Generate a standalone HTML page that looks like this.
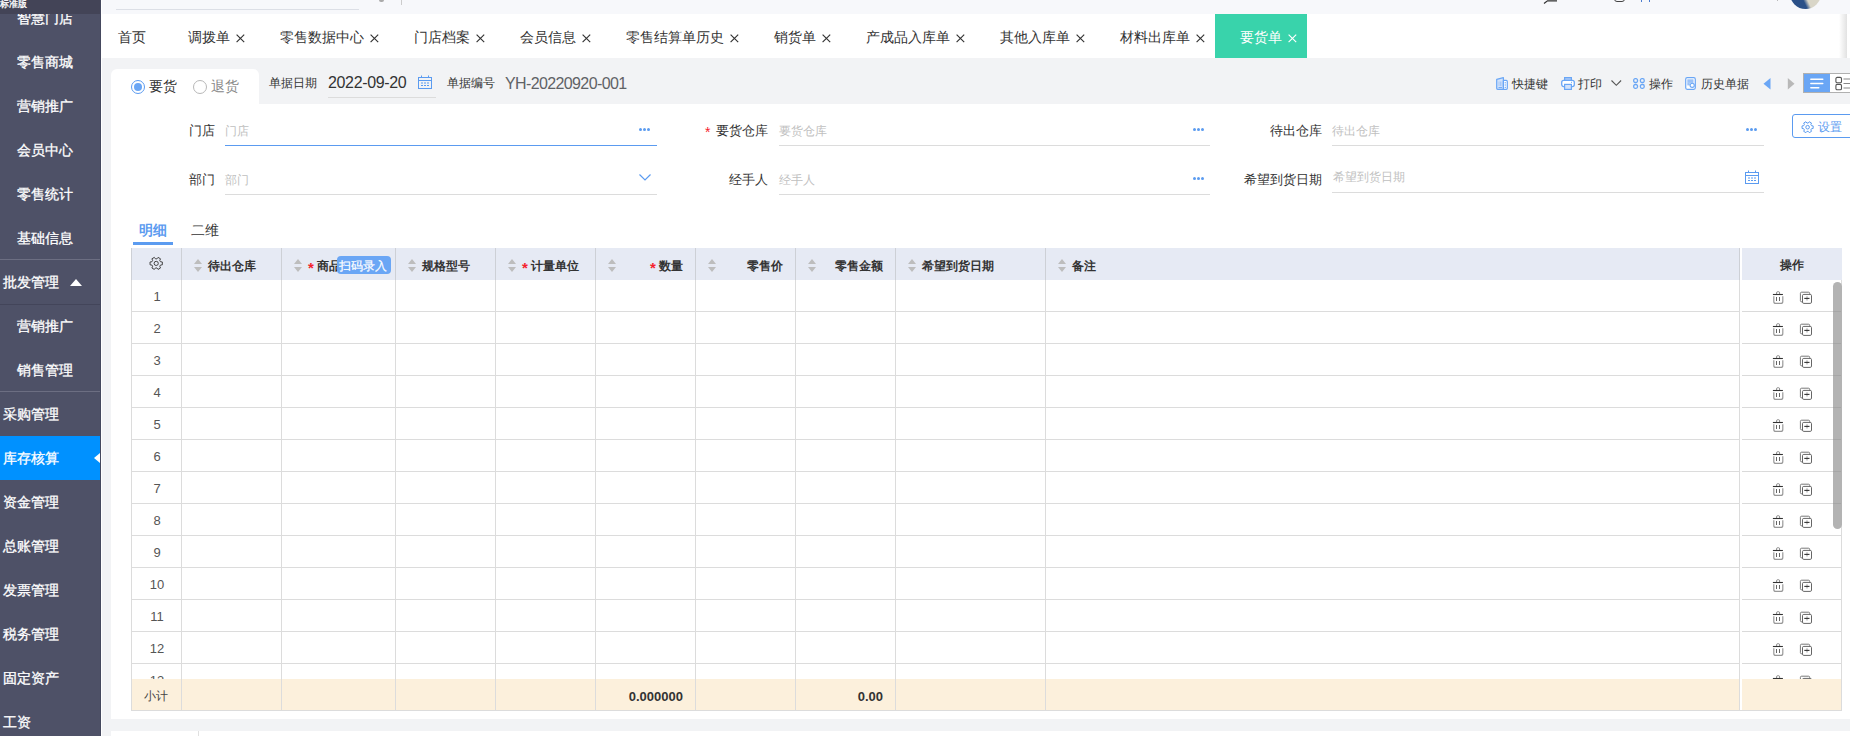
<!DOCTYPE html>
<html><head><meta charset="utf-8">
<style>
*{box-sizing:border-box;margin:0;padding:0}
html,body{width:1850px;height:736px;overflow:hidden}
body{position:relative;background:#f2f3f5;font-family:"Liberation Sans",sans-serif;color:#333}
.a{position:absolute;white-space:nowrap}
#side{position:absolute;left:0;top:0;width:100px;height:736px;background:#4e5167;overflow:hidden}
#side .it{position:absolute;left:0;width:100px;height:44px;line-height:44px;font-size:14px;color:#fff;-webkit-text-stroke:0.3px #fff}
#side .sub{padding-left:17px}
#side .main{padding-left:3px}
.t14{font-size:14px;line-height:20px}
.t13{font-size:13px;line-height:18px}
.t12{font-size:12px;line-height:16px}
.t15{font-size:15px;line-height:20px}
svg{position:absolute;overflow:visible}
</style></head><body>

<div id="side">
<div class="it sub" style="top:-4px">智慧门店</div>
<div style="position:absolute;left:0;top:0;width:100px;height:14px;background:#434457;overflow:hidden"><div style="position:absolute;left:0px;top:-2px;font-size:9px;color:#fff;line-height:12px;-webkit-text-stroke:0.3px #fff">标准版</div></div>
<div class="it sub" style="top:40px">零售商城</div>
<div class="it sub" style="top:84px">营销推广</div>
<div class="it sub" style="top:128px">会员中心</div>
<div class="it sub" style="top:172px">零售统计</div>
<div class="it sub" style="top:216px">基础信息</div>
<div class="a" style="left:0;top:259px;width:100px;height:1px;background:#6c6e82"></div>
<div class="it main" style="top:260px">批发管理</div>
<div class="a" style="left:70px;top:279px;width:0;height:0;border-left:6px solid transparent;border-right:6px solid transparent;border-bottom:7px solid #fff"></div>
<div class="a" style="left:0;top:304px;width:100px;height:1px;background:#43455a"></div>
<div class="it sub" style="top:304px">营销推广</div>
<div class="it sub" style="top:348px">销售管理</div>
<div class="a" style="left:0;top:391px;width:100px;height:1px;background:#6c6e82"></div>
<div class="it main" style="top:392px">采购管理</div>
<div class="it main" style="top:436px;background:#0091ff">库存核算</div>
<div class="a" style="left:94px;top:453px;width:0;height:0;border-top:5px solid transparent;border-bottom:5px solid transparent;border-right:6px solid #fff"></div>
<div class="it main" style="top:480px">资金管理</div>
<div class="it main" style="top:524px">总账管理</div>
<div class="it main" style="top:568px">发票管理</div>
<div class="it main" style="top:612px">税务管理</div>
<div class="it main" style="top:656px">固定资产</div>
<div class="it main" style="top:700px">工资</div>
</div>
<div class="a" style="left:100px;top:0;width:1px;height:736px;background:#45495e"></div>
<div class="a" style="left:101px;top:0;width:1px;height:736px;background:#fff"></div>
<div class="a" style="left:102px;top:0;width:1748px;height:14px;background:#f7f8fb"></div>
<div class="a" style="left:116px;top:9px;width:243px;height:1px;background:#dcdfe6"></div>
<div class="a" style="left:401px;top:0;width:1px;height:5px;background:#ccc"></div>
<div class="a" style="left:379px;top:0;width:5px;height:2px;background:#aaa;border-radius:0 0 2px 2px"></div>
<svg style="left:1543px;top:0" width="15" height="4" viewBox="0 0 15 4"><path d="M1 3.5L4.5 0.8H14" fill="none" stroke="#333" stroke-width="1.2"/></svg>
<div class="a" style="left:1614px;top:-9px;width:11px;height:10.5px;border:1.3px solid #444;border-radius:3px"></div>
<div class="a" style="left:1641px;top:0;width:1px;height:1.5px;background:#4a7bd0"></div>
<div class="a" style="left:1649px;top:0;width:1px;height:1.5px;background:#4a7bd0"></div>
<div class="a" style="left:1777px;top:0;width:1px;height:1px;background:#bbb"></div>
<div class="a" style="left:1790px;top:-22px;width:31px;height:31px;border-radius:50%;background:linear-gradient(65deg,#2a5088 0,#2a5088 38%,#d9d6c8 48%,#d9d6c8 100%)"></div>
<div class="a" style="left:102px;top:14px;width:1748px;height:44px;background:#fff"></div>
<div class="a" style="left:1215px;top:14px;width:92px;height:44px;background:#39d3ab"></div>
<div class="a" style="left:1839px;top:14px;width:8px;height:44px;background:linear-gradient(90deg,rgba(220,220,220,0),#e2e2e2)"></div>
<div class="a t14" style="left:118px;top:26.5px;color:#333">首页</div>
<div class="a t14" style="left:188px;top:26.5px;color:#333">调拨单</div>
<svg style="left:236px;top:33.5px" width="9" height="9" viewBox="0 0 9 9"><path d="M0.6 0.6L8.2 8.2M8.2 0.6L0.6 8.2" stroke="#333" stroke-width="1.15"/></svg>
<div class="a t14" style="left:280px;top:26.5px;color:#333">零售数据中心</div>
<svg style="left:370px;top:33.5px" width="9" height="9" viewBox="0 0 9 9"><path d="M0.6 0.6L8.2 8.2M8.2 0.6L0.6 8.2" stroke="#333" stroke-width="1.15"/></svg>
<div class="a t14" style="left:414px;top:26.5px;color:#333">门店档案</div>
<svg style="left:476px;top:33.5px" width="9" height="9" viewBox="0 0 9 9"><path d="M0.6 0.6L8.2 8.2M8.2 0.6L0.6 8.2" stroke="#333" stroke-width="1.15"/></svg>
<div class="a t14" style="left:520px;top:26.5px;color:#333">会员信息</div>
<svg style="left:582px;top:33.5px" width="9" height="9" viewBox="0 0 9 9"><path d="M0.6 0.6L8.2 8.2M8.2 0.6L0.6 8.2" stroke="#333" stroke-width="1.15"/></svg>
<div class="a t14" style="left:626px;top:26.5px;color:#333">零售结算单历史</div>
<svg style="left:730px;top:33.5px" width="9" height="9" viewBox="0 0 9 9"><path d="M0.6 0.6L8.2 8.2M8.2 0.6L0.6 8.2" stroke="#333" stroke-width="1.15"/></svg>
<div class="a t14" style="left:774px;top:26.5px;color:#333">销货单</div>
<svg style="left:822px;top:33.5px" width="9" height="9" viewBox="0 0 9 9"><path d="M0.6 0.6L8.2 8.2M8.2 0.6L0.6 8.2" stroke="#333" stroke-width="1.15"/></svg>
<div class="a t14" style="left:866px;top:26.5px;color:#333">产成品入库单</div>
<svg style="left:956px;top:33.5px" width="9" height="9" viewBox="0 0 9 9"><path d="M0.6 0.6L8.2 8.2M8.2 0.6L0.6 8.2" stroke="#333" stroke-width="1.15"/></svg>
<div class="a t14" style="left:1000px;top:26.5px;color:#333">其他入库单</div>
<svg style="left:1076px;top:33.5px" width="9" height="9" viewBox="0 0 9 9"><path d="M0.6 0.6L8.2 8.2M8.2 0.6L0.6 8.2" stroke="#333" stroke-width="1.15"/></svg>
<div class="a t14" style="left:1120px;top:26.5px;color:#333">材料出库单</div>
<svg style="left:1196px;top:33.5px" width="9" height="9" viewBox="0 0 9 9"><path d="M0.6 0.6L8.2 8.2M8.2 0.6L0.6 8.2" stroke="#333" stroke-width="1.15"/></svg>
<div class="a t14" style="left:1240px;top:26.5px;color:#fff">要货单</div>
<svg style="left:1288px;top:33.5px" width="9" height="9" viewBox="0 0 9 9"><path d="M0.6 0.6L8.2 8.2M8.2 0.6L0.6 8.2" stroke="#fff" stroke-width="1.15"/></svg>
<div class="a" style="left:111px;top:69px;width:148px;height:40px;background:#fff;border-radius:6px 6px 0 0"></div>
<div class="a" style="left:131px;top:80px;width:14px;height:14px;border-radius:50%;border:1px solid #5b9bf0;background:#fff"></div>
<div class="a" style="left:134px;top:83px;width:8px;height:8px;border-radius:50%;background:#6aa6f5"></div>
<div class="a t14" style="left:149px;top:76px;color:#333">要货</div>
<div class="a" style="left:193px;top:80px;width:14px;height:14px;border-radius:50%;border:1px solid #b8b8b8;background:#fff"></div>
<div class="a t14" style="left:211px;top:76px;color:#888">退货</div>
<div class="a t12" style="left:269px;top:75px;color:#333">单据日期</div>
<div class="a" style="left:328px;top:73px;color:#333;font-size:16px;line-height:20px;letter-spacing:-0.35px">2022-09-20</div>
<svg style="left:418px;top:75px" width="14" height="14" viewBox="0 0 14 14"><rect x="0.5" y="2.5" width="13" height="11" fill="none" stroke="#5b9bf0"/><path d="M0.5 5.5H13.5M3.5 0.5V3M10.5 0.5V3M3 8H5M6 8H8M9 8H11M3 10.5H5M6 10.5H8M9 10.5H11" stroke="#5b9bf0"/></svg>
<div class="a" style="left:328px;top:97px;width:108px;height:1px;background:#dcdcdc"></div>
<div class="a t12" style="left:447px;top:75px;color:#333">单据编号</div>
<div class="a" style="left:505px;top:74px;color:#606266;font-size:16px;line-height:20px;letter-spacing:-0.62px">YH-20220920-001</div>
<svg style="left:1496px;top:77px" width="12" height="13" viewBox="0 0 12 13"><path d="M0.7 2.3L7.4 0.7V12.3H1.7A1 1 0 0 1 0.7 11.3Z" fill="#d3e3fb" stroke="#6aa6f5" stroke-width="1.2" stroke-linejoin="round"/><path d="M7.4 3.4H10.3A1 1 0 0 1 11.3 4.4V11.3A1 1 0 0 1 10.3 12.3H7.4Z" fill="#fff" stroke="#6aa6f5" stroke-width="1.2" stroke-linejoin="round"/><path d="M3 4.5V9M4.5 4.5V9M6 4.5V9" stroke="#9cc2f7" stroke-width="0.8"/><path d="M2.5 10.6H6M8.6 5.8H10M8.6 8H10M8.6 10.3H10" stroke="#6aa6f5" stroke-width="1"/></svg>
<div class="a t12" style="left:1512px;top:76px;color:#333">快捷键</div>
<svg style="left:1561px;top:77px" width="14" height="13" viewBox="0 0 14 13"><rect x="3.6" y="0.6" width="6.8" height="3" fill="#a9c9f8" stroke="#6aa6f5" stroke-width="1.2"/><rect x="0.7" y="3.4" width="12.6" height="6.2" rx="2" fill="#fff" stroke="#6aa6f5" stroke-width="1.3"/><rect x="3.6" y="7.4" width="6.8" height="5" fill="#d3e3fb" stroke="#6aa6f5" stroke-width="1.2"/><path d="M10 5.3H11" stroke="#6aa6f5"/></svg>
<div class="a t12" style="left:1578px;top:76px;color:#333">打印</div>
<svg style="left:1611px;top:80px" width="11" height="6" viewBox="0 0 11 6"><path d="M0.5 0.5L5.3 5.3L10.1 0.5" fill="none" stroke="#555" stroke-width="1.1"/></svg>
<svg style="left:1633px;top:78px" width="12" height="11" viewBox="0 0 12 11"><rect x="0.7" y="0.7" width="3.8" height="3.8" rx="1.5" fill="none" stroke="#6aa6f5" stroke-width="1.3"/><rect x="7.4" y="0.7" width="3.8" height="3.8" rx="1.5" fill="none" stroke="#6aa6f5" stroke-width="1.3"/><rect x="0.7" y="6.5" width="3.8" height="3.8" rx="1.5" fill="none" stroke="#6aa6f5" stroke-width="1.3"/><rect x="7.4" y="6.5" width="3.8" height="3.8" rx="1.5" fill="none" stroke="#6aa6f5" stroke-width="1.3"/></svg>
<div class="a t12" style="left:1649px;top:76px;color:#333">操作</div>
<svg style="left:1685px;top:77px" width="11" height="13" viewBox="0 0 11 13"><rect x="0.7" y="0.7" width="9.6" height="11.6" rx="1.5" fill="#fff" stroke="#6aa6f5" stroke-width="1.2"/><rect x="2.3" y="2.3" width="6.2" height="3.6" fill="#9cc2f7"/><rect x="2.3" y="5.9" width="2.5" height="2.5" fill="#9cc2f7"/><circle cx="7.2" cy="8.3" r="2.1" fill="#fff" stroke="#6aa6f5" stroke-width="1.1"/></svg>
<div class="a t12" style="left:1701px;top:76px;color:#333">历史单据</div>
<svg style="left:1763px;top:77.5px" width="8" height="12" viewBox="0 0 8 12"><path d="M7.5 0V11.5L0.5 5.75Z" fill="#6aa6f5"/></svg>
<svg style="left:1787px;top:77.5px" width="8" height="12" viewBox="0 0 8 12"><path d="M0.8 0V11.5L7.5 5.75Z" fill="#b8b8b8"/></svg>
<div class="a" style="left:1803px;top:73px;width:60px;height:20px;border:1px solid #b0b0b0;background:#fff"></div>
<div class="a" style="left:1804px;top:74px;width:26px;height:18px;background:#6aa6f5"></div>
<svg style="left:1810px;top:77px" width="13" height="12" viewBox="0 0 13 12"><path d="M0.8 2.2H12.8M0.8 6.5H12.8M0.8 10.7H8.8" stroke="#fff" stroke-width="1.4" stroke-linecap="round"/></svg>
<svg style="left:1835px;top:77px" width="15" height="14" viewBox="0 0 15 14"><rect x="0.9" y="0.4" width="5.6" height="5.4" rx="1.3" fill="none" stroke="#555" stroke-width="1.1"/><rect x="0.9" y="7.4" width="5.6" height="5.4" rx="1.3" fill="none" stroke="#555" stroke-width="1.1"/><path d="M8.5 2H15M8.5 6.5H15M8.5 11H15" stroke="#888" stroke-width="1.2"/></svg>
<div class="a" style="left:111px;top:104px;width:1739px;height:615px;background:#fff"></div>
<div class="a" style="left:111px;top:731px;width:1739px;height:5px;background:#fff"></div>
<div class="a" style="left:198px;top:731px;width:1px;height:5px;background:#e0e0e0"></div>
<div class="a t13" style="right:1635px;top:122px;color:#333">门店</div>
<div class="a t12" style="left:225px;top:123px;color:#bfbfbf">门店</div>
<div class="a" style="left:225px;top:145px;width:432px;height:1px;background:#5b9bf0"></div>
<div class="a" style="left:639px;top:128px;width:3px;height:3px;border-radius:50%;background:#5b9bf0"></div><div class="a" style="left:643px;top:128px;width:3px;height:3px;border-radius:50%;background:#5b9bf0"></div><div class="a" style="left:647px;top:128px;width:3px;height:3px;border-radius:50%;background:#5b9bf0"></div>
<div class="a t13" style="right:1082px;top:122px;color:#333">要货仓库</div>
<div class="a" style="left:705px;top:123px;color:#f5222d;font-size:14px;line-height:18px">*</div>
<div class="a t12" style="left:779px;top:123px;color:#bfbfbf">要货仓库</div>
<div class="a" style="left:779px;top:145px;width:431px;height:1px;background:#dcdcdc"></div>
<div class="a" style="left:1193px;top:128px;width:3px;height:3px;border-radius:50%;background:#5b9bf0"></div><div class="a" style="left:1197px;top:128px;width:3px;height:3px;border-radius:50%;background:#5b9bf0"></div><div class="a" style="left:1201px;top:128px;width:3px;height:3px;border-radius:50%;background:#5b9bf0"></div>
<div class="a t13" style="right:528px;top:122px;color:#333">待出仓库</div>
<div class="a t12" style="left:1332px;top:123px;color:#bfbfbf">待出仓库</div>
<div class="a" style="left:1332px;top:145px;width:432px;height:1px;background:#dcdcdc"></div>
<div class="a" style="left:1746px;top:128px;width:3px;height:3px;border-radius:50%;background:#5b9bf0"></div><div class="a" style="left:1750px;top:128px;width:3px;height:3px;border-radius:50%;background:#5b9bf0"></div><div class="a" style="left:1754px;top:128px;width:3px;height:3px;border-radius:50%;background:#5b9bf0"></div>
<div class="a" style="left:1792px;top:114px;width:70px;height:24px;border:1px solid #5b9bf0;border-radius:3px;background:#fff"></div>
<svg style="left:1801px;top:121px" width="13" height="13" viewBox="0 0 13 13"><path d="M10.52 4.69L12.15 4.92L12.15 7.48L10.52 7.71L9.86 8.84L10.49 10.37L8.27 11.65L7.26 10.35L5.94 10.35L4.93 11.65L2.71 10.37L3.34 8.84L2.68 7.71L1.05 7.48L1.05 4.92L2.68 4.69L3.34 3.56L2.71 2.03L4.93 0.75L5.94 2.05L7.26 2.05L8.27 0.75L10.49 2.03L9.86 3.56Z" fill="none" stroke="#5b9bf0" stroke-linejoin="round"/><circle cx="6.6" cy="6.2" r="1.8" fill="none" stroke="#5b9bf0"/></svg>
<div class="a t12" style="left:1818px;top:119px;color:#5b9bf0">设置</div>
<div class="a t13" style="right:1635px;top:171px;color:#333">部门</div>
<div class="a t12" style="left:225px;top:172px;color:#bfbfbf">部门</div>
<div class="a" style="left:225px;top:194px;width:432px;height:1px;background:#dcdcdc"></div>
<svg style="left:639px;top:174px" width="12" height="7" viewBox="0 0 12 7"><path d="M0.5 0.5L6 6L11.5 0.5" fill="none" stroke="#5b9bf0" stroke-width="1.2"/></svg>
<div class="a t13" style="right:1082px;top:171px;color:#333">经手人</div>
<div class="a t12" style="left:779px;top:172px;color:#bfbfbf">经手人</div>
<div class="a" style="left:779px;top:194px;width:431px;height:1px;background:#dcdcdc"></div>
<div class="a" style="left:1193px;top:177px;width:3px;height:3px;border-radius:50%;background:#5b9bf0"></div><div class="a" style="left:1197px;top:177px;width:3px;height:3px;border-radius:50%;background:#5b9bf0"></div><div class="a" style="left:1201px;top:177px;width:3px;height:3px;border-radius:50%;background:#5b9bf0"></div>
<div class="a t13" style="right:528px;top:171px;color:#333">希望到货日期</div>
<div class="a t12" style="left:1333px;top:169px;color:#bfbfbf">希望到货日期</div>
<div class="a" style="left:1332px;top:192px;width:432px;height:1px;background:#dcdcdc"></div>
<svg style="left:1745px;top:170px" width="14" height="14" viewBox="0 0 14 14"><rect x="0.5" y="2.5" width="13" height="11" fill="none" stroke="#5b9bf0"/><path d="M0.5 5.5H13.5M3.5 0.5V3M10.5 0.5V3M3 8H5M6 8H8M9 8H11M3 10.5H5M6 10.5H8M9 10.5H11" stroke="#5b9bf0"/></svg>
<div class="a" style="left:139px;top:222px;color:#5b9bf0;font-weight:bold;font-size:13.6px;line-height:18px">明细</div>
<div class="a" style="left:133px;top:242px;width:40px;height:3px;background:#5b9bf0"></div>
<div class="a" style="left:191px;top:222px;color:#333;font-size:13.6px;line-height:18px">二维</div>
<div class="a" style="left:131px;top:248px;width:1608px;height:32px;background:#e6eaf4"></div>
<div class="a" style="left:1742px;top:248px;width:100px;height:32px;background:#e6eaf4"></div>
<div class="a" style="left:131px;top:311px;width:1609px;height:1px;background:#dcdcdc"></div>
<div class="a" style="left:131px;top:343px;width:1609px;height:1px;background:#dcdcdc"></div>
<div class="a" style="left:131px;top:375px;width:1609px;height:1px;background:#dcdcdc"></div>
<div class="a" style="left:131px;top:407px;width:1609px;height:1px;background:#dcdcdc"></div>
<div class="a" style="left:131px;top:439px;width:1609px;height:1px;background:#dcdcdc"></div>
<div class="a" style="left:131px;top:471px;width:1609px;height:1px;background:#dcdcdc"></div>
<div class="a" style="left:131px;top:503px;width:1609px;height:1px;background:#dcdcdc"></div>
<div class="a" style="left:131px;top:535px;width:1609px;height:1px;background:#dcdcdc"></div>
<div class="a" style="left:131px;top:567px;width:1609px;height:1px;background:#dcdcdc"></div>
<div class="a" style="left:131px;top:599px;width:1609px;height:1px;background:#dcdcdc"></div>
<div class="a" style="left:131px;top:631px;width:1609px;height:1px;background:#dcdcdc"></div>
<div class="a" style="left:131px;top:663px;width:1609px;height:1px;background:#dcdcdc"></div>
<div class="a" style="left:132px;width:50px;text-align:center;top:288px;color:#555;font-size:13px;line-height:18px">1</div>
<div class="a" style="left:132px;width:50px;text-align:center;top:320px;color:#555;font-size:13px;line-height:18px">2</div>
<div class="a" style="left:132px;width:50px;text-align:center;top:352px;color:#555;font-size:13px;line-height:18px">3</div>
<div class="a" style="left:132px;width:50px;text-align:center;top:384px;color:#555;font-size:13px;line-height:18px">4</div>
<div class="a" style="left:132px;width:50px;text-align:center;top:416px;color:#555;font-size:13px;line-height:18px">5</div>
<div class="a" style="left:132px;width:50px;text-align:center;top:448px;color:#555;font-size:13px;line-height:18px">6</div>
<div class="a" style="left:132px;width:50px;text-align:center;top:480px;color:#555;font-size:13px;line-height:18px">7</div>
<div class="a" style="left:132px;width:50px;text-align:center;top:512px;color:#555;font-size:13px;line-height:18px">8</div>
<div class="a" style="left:132px;width:50px;text-align:center;top:544px;color:#555;font-size:13px;line-height:18px">9</div>
<div class="a" style="left:132px;width:50px;text-align:center;top:576px;color:#555;font-size:13px;line-height:18px">10</div>
<div class="a" style="left:132px;width:50px;text-align:center;top:608px;color:#555;font-size:13px;line-height:18px">11</div>
<div class="a" style="left:132px;width:50px;text-align:center;top:640px;color:#555;font-size:13px;line-height:18px">12</div>
<div class="a" style="left:132px;width:50px;text-align:center;top:672px;color:#555;font-size:13px;line-height:18px">13</div>
<svg style="left:1772px;top:290px" width="12" height="14" viewBox="0 0 12 14"><path d="M4.6 4.2V2.8a1.1 1.1 0 0 1 1.1-1.1h0.8a1.1 1.1 0 0 1 1.1 1.1V4.2" fill="none" stroke="#888"/><path d="M0.9 4.5H10.9" stroke="#333" stroke-width="1.1"/><path d="M1.8 6.2V11.4a2 2 0 0 0 2 2H8.8a2 2 0 0 0 2-2V6.2" fill="none" stroke="#999" stroke-width="1.2"/><path d="M4.5 7V11M7.5 7V11" stroke="#666"/></svg>
<svg style="left:1799px;top:290px" width="14" height="14" viewBox="0 0 14 14"><rect x="1.4" y="2.2" width="9.3" height="9.6" rx="1.2" fill="none" stroke="#777"/><rect x="3.5" y="4.4" width="9" height="9" rx="1.3" fill="#fff" stroke="#666"/><path d="M8 6.3V10.5" stroke="#999"/><path d="M5.3 8.4H10.5" stroke="#333" stroke-width="1.1"/></svg>
<svg style="left:1772px;top:322px" width="12" height="14" viewBox="0 0 12 14"><path d="M4.6 4.2V2.8a1.1 1.1 0 0 1 1.1-1.1h0.8a1.1 1.1 0 0 1 1.1 1.1V4.2" fill="none" stroke="#888"/><path d="M0.9 4.5H10.9" stroke="#333" stroke-width="1.1"/><path d="M1.8 6.2V11.4a2 2 0 0 0 2 2H8.8a2 2 0 0 0 2-2V6.2" fill="none" stroke="#999" stroke-width="1.2"/><path d="M4.5 7V11M7.5 7V11" stroke="#666"/></svg>
<svg style="left:1799px;top:322px" width="14" height="14" viewBox="0 0 14 14"><rect x="1.4" y="2.2" width="9.3" height="9.6" rx="1.2" fill="none" stroke="#777"/><rect x="3.5" y="4.4" width="9" height="9" rx="1.3" fill="#fff" stroke="#666"/><path d="M8 6.3V10.5" stroke="#999"/><path d="M5.3 8.4H10.5" stroke="#333" stroke-width="1.1"/></svg>
<svg style="left:1772px;top:354px" width="12" height="14" viewBox="0 0 12 14"><path d="M4.6 4.2V2.8a1.1 1.1 0 0 1 1.1-1.1h0.8a1.1 1.1 0 0 1 1.1 1.1V4.2" fill="none" stroke="#888"/><path d="M0.9 4.5H10.9" stroke="#333" stroke-width="1.1"/><path d="M1.8 6.2V11.4a2 2 0 0 0 2 2H8.8a2 2 0 0 0 2-2V6.2" fill="none" stroke="#999" stroke-width="1.2"/><path d="M4.5 7V11M7.5 7V11" stroke="#666"/></svg>
<svg style="left:1799px;top:354px" width="14" height="14" viewBox="0 0 14 14"><rect x="1.4" y="2.2" width="9.3" height="9.6" rx="1.2" fill="none" stroke="#777"/><rect x="3.5" y="4.4" width="9" height="9" rx="1.3" fill="#fff" stroke="#666"/><path d="M8 6.3V10.5" stroke="#999"/><path d="M5.3 8.4H10.5" stroke="#333" stroke-width="1.1"/></svg>
<svg style="left:1772px;top:386px" width="12" height="14" viewBox="0 0 12 14"><path d="M4.6 4.2V2.8a1.1 1.1 0 0 1 1.1-1.1h0.8a1.1 1.1 0 0 1 1.1 1.1V4.2" fill="none" stroke="#888"/><path d="M0.9 4.5H10.9" stroke="#333" stroke-width="1.1"/><path d="M1.8 6.2V11.4a2 2 0 0 0 2 2H8.8a2 2 0 0 0 2-2V6.2" fill="none" stroke="#999" stroke-width="1.2"/><path d="M4.5 7V11M7.5 7V11" stroke="#666"/></svg>
<svg style="left:1799px;top:386px" width="14" height="14" viewBox="0 0 14 14"><rect x="1.4" y="2.2" width="9.3" height="9.6" rx="1.2" fill="none" stroke="#777"/><rect x="3.5" y="4.4" width="9" height="9" rx="1.3" fill="#fff" stroke="#666"/><path d="M8 6.3V10.5" stroke="#999"/><path d="M5.3 8.4H10.5" stroke="#333" stroke-width="1.1"/></svg>
<svg style="left:1772px;top:418px" width="12" height="14" viewBox="0 0 12 14"><path d="M4.6 4.2V2.8a1.1 1.1 0 0 1 1.1-1.1h0.8a1.1 1.1 0 0 1 1.1 1.1V4.2" fill="none" stroke="#888"/><path d="M0.9 4.5H10.9" stroke="#333" stroke-width="1.1"/><path d="M1.8 6.2V11.4a2 2 0 0 0 2 2H8.8a2 2 0 0 0 2-2V6.2" fill="none" stroke="#999" stroke-width="1.2"/><path d="M4.5 7V11M7.5 7V11" stroke="#666"/></svg>
<svg style="left:1799px;top:418px" width="14" height="14" viewBox="0 0 14 14"><rect x="1.4" y="2.2" width="9.3" height="9.6" rx="1.2" fill="none" stroke="#777"/><rect x="3.5" y="4.4" width="9" height="9" rx="1.3" fill="#fff" stroke="#666"/><path d="M8 6.3V10.5" stroke="#999"/><path d="M5.3 8.4H10.5" stroke="#333" stroke-width="1.1"/></svg>
<svg style="left:1772px;top:450px" width="12" height="14" viewBox="0 0 12 14"><path d="M4.6 4.2V2.8a1.1 1.1 0 0 1 1.1-1.1h0.8a1.1 1.1 0 0 1 1.1 1.1V4.2" fill="none" stroke="#888"/><path d="M0.9 4.5H10.9" stroke="#333" stroke-width="1.1"/><path d="M1.8 6.2V11.4a2 2 0 0 0 2 2H8.8a2 2 0 0 0 2-2V6.2" fill="none" stroke="#999" stroke-width="1.2"/><path d="M4.5 7V11M7.5 7V11" stroke="#666"/></svg>
<svg style="left:1799px;top:450px" width="14" height="14" viewBox="0 0 14 14"><rect x="1.4" y="2.2" width="9.3" height="9.6" rx="1.2" fill="none" stroke="#777"/><rect x="3.5" y="4.4" width="9" height="9" rx="1.3" fill="#fff" stroke="#666"/><path d="M8 6.3V10.5" stroke="#999"/><path d="M5.3 8.4H10.5" stroke="#333" stroke-width="1.1"/></svg>
<svg style="left:1772px;top:482px" width="12" height="14" viewBox="0 0 12 14"><path d="M4.6 4.2V2.8a1.1 1.1 0 0 1 1.1-1.1h0.8a1.1 1.1 0 0 1 1.1 1.1V4.2" fill="none" stroke="#888"/><path d="M0.9 4.5H10.9" stroke="#333" stroke-width="1.1"/><path d="M1.8 6.2V11.4a2 2 0 0 0 2 2H8.8a2 2 0 0 0 2-2V6.2" fill="none" stroke="#999" stroke-width="1.2"/><path d="M4.5 7V11M7.5 7V11" stroke="#666"/></svg>
<svg style="left:1799px;top:482px" width="14" height="14" viewBox="0 0 14 14"><rect x="1.4" y="2.2" width="9.3" height="9.6" rx="1.2" fill="none" stroke="#777"/><rect x="3.5" y="4.4" width="9" height="9" rx="1.3" fill="#fff" stroke="#666"/><path d="M8 6.3V10.5" stroke="#999"/><path d="M5.3 8.4H10.5" stroke="#333" stroke-width="1.1"/></svg>
<svg style="left:1772px;top:514px" width="12" height="14" viewBox="0 0 12 14"><path d="M4.6 4.2V2.8a1.1 1.1 0 0 1 1.1-1.1h0.8a1.1 1.1 0 0 1 1.1 1.1V4.2" fill="none" stroke="#888"/><path d="M0.9 4.5H10.9" stroke="#333" stroke-width="1.1"/><path d="M1.8 6.2V11.4a2 2 0 0 0 2 2H8.8a2 2 0 0 0 2-2V6.2" fill="none" stroke="#999" stroke-width="1.2"/><path d="M4.5 7V11M7.5 7V11" stroke="#666"/></svg>
<svg style="left:1799px;top:514px" width="14" height="14" viewBox="0 0 14 14"><rect x="1.4" y="2.2" width="9.3" height="9.6" rx="1.2" fill="none" stroke="#777"/><rect x="3.5" y="4.4" width="9" height="9" rx="1.3" fill="#fff" stroke="#666"/><path d="M8 6.3V10.5" stroke="#999"/><path d="M5.3 8.4H10.5" stroke="#333" stroke-width="1.1"/></svg>
<svg style="left:1772px;top:546px" width="12" height="14" viewBox="0 0 12 14"><path d="M4.6 4.2V2.8a1.1 1.1 0 0 1 1.1-1.1h0.8a1.1 1.1 0 0 1 1.1 1.1V4.2" fill="none" stroke="#888"/><path d="M0.9 4.5H10.9" stroke="#333" stroke-width="1.1"/><path d="M1.8 6.2V11.4a2 2 0 0 0 2 2H8.8a2 2 0 0 0 2-2V6.2" fill="none" stroke="#999" stroke-width="1.2"/><path d="M4.5 7V11M7.5 7V11" stroke="#666"/></svg>
<svg style="left:1799px;top:546px" width="14" height="14" viewBox="0 0 14 14"><rect x="1.4" y="2.2" width="9.3" height="9.6" rx="1.2" fill="none" stroke="#777"/><rect x="3.5" y="4.4" width="9" height="9" rx="1.3" fill="#fff" stroke="#666"/><path d="M8 6.3V10.5" stroke="#999"/><path d="M5.3 8.4H10.5" stroke="#333" stroke-width="1.1"/></svg>
<svg style="left:1772px;top:578px" width="12" height="14" viewBox="0 0 12 14"><path d="M4.6 4.2V2.8a1.1 1.1 0 0 1 1.1-1.1h0.8a1.1 1.1 0 0 1 1.1 1.1V4.2" fill="none" stroke="#888"/><path d="M0.9 4.5H10.9" stroke="#333" stroke-width="1.1"/><path d="M1.8 6.2V11.4a2 2 0 0 0 2 2H8.8a2 2 0 0 0 2-2V6.2" fill="none" stroke="#999" stroke-width="1.2"/><path d="M4.5 7V11M7.5 7V11" stroke="#666"/></svg>
<svg style="left:1799px;top:578px" width="14" height="14" viewBox="0 0 14 14"><rect x="1.4" y="2.2" width="9.3" height="9.6" rx="1.2" fill="none" stroke="#777"/><rect x="3.5" y="4.4" width="9" height="9" rx="1.3" fill="#fff" stroke="#666"/><path d="M8 6.3V10.5" stroke="#999"/><path d="M5.3 8.4H10.5" stroke="#333" stroke-width="1.1"/></svg>
<svg style="left:1772px;top:610px" width="12" height="14" viewBox="0 0 12 14"><path d="M4.6 4.2V2.8a1.1 1.1 0 0 1 1.1-1.1h0.8a1.1 1.1 0 0 1 1.1 1.1V4.2" fill="none" stroke="#888"/><path d="M0.9 4.5H10.9" stroke="#333" stroke-width="1.1"/><path d="M1.8 6.2V11.4a2 2 0 0 0 2 2H8.8a2 2 0 0 0 2-2V6.2" fill="none" stroke="#999" stroke-width="1.2"/><path d="M4.5 7V11M7.5 7V11" stroke="#666"/></svg>
<svg style="left:1799px;top:610px" width="14" height="14" viewBox="0 0 14 14"><rect x="1.4" y="2.2" width="9.3" height="9.6" rx="1.2" fill="none" stroke="#777"/><rect x="3.5" y="4.4" width="9" height="9" rx="1.3" fill="#fff" stroke="#666"/><path d="M8 6.3V10.5" stroke="#999"/><path d="M5.3 8.4H10.5" stroke="#333" stroke-width="1.1"/></svg>
<svg style="left:1772px;top:642px" width="12" height="14" viewBox="0 0 12 14"><path d="M4.6 4.2V2.8a1.1 1.1 0 0 1 1.1-1.1h0.8a1.1 1.1 0 0 1 1.1 1.1V4.2" fill="none" stroke="#888"/><path d="M0.9 4.5H10.9" stroke="#333" stroke-width="1.1"/><path d="M1.8 6.2V11.4a2 2 0 0 0 2 2H8.8a2 2 0 0 0 2-2V6.2" fill="none" stroke="#999" stroke-width="1.2"/><path d="M4.5 7V11M7.5 7V11" stroke="#666"/></svg>
<svg style="left:1799px;top:642px" width="14" height="14" viewBox="0 0 14 14"><rect x="1.4" y="2.2" width="9.3" height="9.6" rx="1.2" fill="none" stroke="#777"/><rect x="3.5" y="4.4" width="9" height="9" rx="1.3" fill="#fff" stroke="#666"/><path d="M8 6.3V10.5" stroke="#999"/><path d="M5.3 8.4H10.5" stroke="#333" stroke-width="1.1"/></svg>
<svg style="left:1772px;top:674px" width="12" height="14" viewBox="0 0 12 14"><path d="M4.6 4.2V2.8a1.1 1.1 0 0 1 1.1-1.1h0.8a1.1 1.1 0 0 1 1.1 1.1V4.2" fill="none" stroke="#888"/><path d="M0.9 4.5H10.9" stroke="#333" stroke-width="1.1"/><path d="M1.8 6.2V11.4a2 2 0 0 0 2 2H8.8a2 2 0 0 0 2-2V6.2" fill="none" stroke="#999" stroke-width="1.2"/><path d="M4.5 7V11M7.5 7V11" stroke="#666"/></svg>
<svg style="left:1799px;top:674px" width="14" height="14" viewBox="0 0 14 14"><rect x="1.4" y="2.2" width="9.3" height="9.6" rx="1.2" fill="none" stroke="#777"/><rect x="3.5" y="4.4" width="9" height="9" rx="1.3" fill="#fff" stroke="#666"/><path d="M8 6.3V10.5" stroke="#999"/><path d="M5.3 8.4H10.5" stroke="#333" stroke-width="1.1"/></svg>
<div class="a" style="left:131px;top:679px;width:1608px;height:31px;background:#fcf0dc"></div>
<div class="a" style="left:1742px;top:679px;width:100px;height:31px;background:#fcf0dc"></div>
<div class="a" style="left:131px;top:710px;width:1711px;height:1px;background:#dcdcdc"></div>
<div class="a t12" style="left:131px;width:50px;text-align:center;top:688px;color:#444">小计</div>
<div class="a" style="right:1167px;top:688px;color:#333;font-weight:bold;font-size:13px;line-height:18px">0.000000</div>
<div class="a" style="right:967px;top:688px;color:#333;font-weight:bold;font-size:13px;line-height:18px">0.00</div>
<div class="a" style="left:131px;top:280px;width:1px;height:431px;background:#dcdcdc"></div>
<div class="a" style="left:131px;top:248px;width:1px;height:32px;background:#cdd0d6"></div>
<div class="a" style="left:181px;top:280px;width:1px;height:431px;background:#dcdcdc"></div>
<div class="a" style="left:181px;top:248px;width:1px;height:32px;background:#cdd0d6"></div>
<div class="a" style="left:281px;top:280px;width:1px;height:431px;background:#dcdcdc"></div>
<div class="a" style="left:281px;top:248px;width:1px;height:32px;background:#cdd0d6"></div>
<div class="a" style="left:395px;top:280px;width:1px;height:431px;background:#dcdcdc"></div>
<div class="a" style="left:395px;top:248px;width:1px;height:32px;background:#cdd0d6"></div>
<div class="a" style="left:495px;top:280px;width:1px;height:431px;background:#dcdcdc"></div>
<div class="a" style="left:495px;top:248px;width:1px;height:32px;background:#cdd0d6"></div>
<div class="a" style="left:595px;top:280px;width:1px;height:431px;background:#dcdcdc"></div>
<div class="a" style="left:595px;top:248px;width:1px;height:32px;background:#cdd0d6"></div>
<div class="a" style="left:695px;top:280px;width:1px;height:431px;background:#dcdcdc"></div>
<div class="a" style="left:695px;top:248px;width:1px;height:32px;background:#cdd0d6"></div>
<div class="a" style="left:795px;top:280px;width:1px;height:431px;background:#dcdcdc"></div>
<div class="a" style="left:795px;top:248px;width:1px;height:32px;background:#cdd0d6"></div>
<div class="a" style="left:895px;top:280px;width:1px;height:431px;background:#dcdcdc"></div>
<div class="a" style="left:895px;top:248px;width:1px;height:32px;background:#cdd0d6"></div>
<div class="a" style="left:1045px;top:280px;width:1px;height:431px;background:#dcdcdc"></div>
<div class="a" style="left:1045px;top:248px;width:1px;height:32px;background:#cdd0d6"></div>
<div class="a" style="left:1739px;top:280px;width:1px;height:431px;background:#dcdcdc"></div>
<div class="a" style="left:1739px;top:248px;width:1px;height:32px;background:#cdd0d6"></div>
<div class="a" style="left:1841px;top:280px;width:1px;height:431px;background:#dcdcdc"></div>
<svg style="left:149px;top:256px" width="14" height="14" viewBox="0 0 14 14"><path d="M11.49 5.75L13.34 5.98L13.34 8.82L11.49 9.05L10.77 10.29L11.50 12.01L9.04 13.42L7.92 11.94L6.48 11.94L5.36 13.42L2.90 12.01L3.63 10.29L2.91 9.05L1.06 8.82L1.06 5.98L2.91 5.75L3.63 4.51L2.90 2.79L5.36 1.38L6.48 2.86L7.92 2.86L9.04 1.38L11.50 2.79L10.77 4.51Z" fill="none" stroke="#444" stroke-linejoin="round"/><circle cx="7.2" cy="7.4" r="2.1" fill="none" stroke="#444"/></svg>
<svg style="left:194px;top:259px" width="8" height="13" viewBox="0 0 8 13"><path d="M4 0L8 5H0Z M4 13L8 8H0Z" fill="#bdbdbd"/></svg>
<div class="a t12" style="left:208px;top:258px;font-weight:bold;color:#333">待出仓库</div>
<svg style="left:294px;top:259px" width="8" height="13" viewBox="0 0 8 13"><path d="M4 0L8 5H0Z M4 13L8 8H0Z" fill="#bdbdbd"/></svg>
<div class="a" style="left:308px;top:259px;color:#f5222d;font-weight:bold;font-size:15px;line-height:18px">*</div>
<div class="a t12" style="left:317px;top:258px;font-weight:bold;color:#333">商品</div>
<div class="a" style="left:337px;top:256px;width:54px;height:18px;border-radius:4px;background:#6aa6f5"></div>
<div class="a t12" style="left:339px;top:258px;color:#fff;-webkit-text-stroke:0.2px #fff">扫码录入</div>
<svg style="left:408px;top:259px" width="8" height="13" viewBox="0 0 8 13"><path d="M4 0L8 5H0Z M4 13L8 8H0Z" fill="#bdbdbd"/></svg>
<div class="a t12" style="left:422px;top:258px;font-weight:bold;color:#333">规格型号</div>
<svg style="left:508px;top:259px" width="8" height="13" viewBox="0 0 8 13"><path d="M4 0L8 5H0Z M4 13L8 8H0Z" fill="#bdbdbd"/></svg>
<div class="a" style="left:522px;top:259px;color:#f5222d;font-weight:bold;font-size:15px;line-height:18px">*</div>
<div class="a t12" style="left:531px;top:258px;font-weight:bold;color:#333">计量单位</div>
<svg style="left:608px;top:259px" width="8" height="13" viewBox="0 0 8 13"><path d="M4 0L8 5H0Z M4 13L8 8H0Z" fill="#bdbdbd"/></svg>
<div class="a" style="left:650px;top:259px;color:#f5222d;font-weight:bold;font-size:15px;line-height:18px">*</div>
<div class="a t12" style="right:1167px;top:258px;font-weight:bold;color:#333">数量</div>
<svg style="left:708px;top:259px" width="8" height="13" viewBox="0 0 8 13"><path d="M4 0L8 5H0Z M4 13L8 8H0Z" fill="#bdbdbd"/></svg>
<div class="a t12" style="right:1067px;top:258px;font-weight:bold;color:#333">零售价</div>
<svg style="left:808px;top:259px" width="8" height="13" viewBox="0 0 8 13"><path d="M4 0L8 5H0Z M4 13L8 8H0Z" fill="#bdbdbd"/></svg>
<div class="a t12" style="right:967px;top:258px;font-weight:bold;color:#333">零售金额</div>
<svg style="left:908px;top:259px" width="8" height="13" viewBox="0 0 8 13"><path d="M4 0L8 5H0Z M4 13L8 8H0Z" fill="#bdbdbd"/></svg>
<div class="a t12" style="left:922px;top:258px;font-weight:bold;color:#333">希望到货日期</div>
<svg style="left:1058px;top:259px" width="8" height="13" viewBox="0 0 8 13"><path d="M4 0L8 5H0Z M4 13L8 8H0Z" fill="#bdbdbd"/></svg>
<div class="a t12" style="left:1072px;top:258px;font-weight:bold;color:#333">备注</div>
<div class="a t12" style="left:1780px;top:256.5px;font-weight:bold;color:#333">操作</div>
<div class="a" style="left:1833px;top:282px;width:9px;height:247px;border-radius:4.5px;background:#b3b3b3"></div>
<div class="a" style="left:1742px;top:311px;width:99px;height:1px;background:rgba(140,140,140,0.32)"></div>
<div class="a" style="left:1742px;top:343px;width:99px;height:1px;background:rgba(140,140,140,0.32)"></div>
<div class="a" style="left:1742px;top:375px;width:99px;height:1px;background:rgba(140,140,140,0.32)"></div>
<div class="a" style="left:1742px;top:407px;width:99px;height:1px;background:rgba(140,140,140,0.32)"></div>
<div class="a" style="left:1742px;top:439px;width:99px;height:1px;background:rgba(140,140,140,0.32)"></div>
<div class="a" style="left:1742px;top:471px;width:99px;height:1px;background:rgba(140,140,140,0.32)"></div>
<div class="a" style="left:1742px;top:503px;width:99px;height:1px;background:rgba(140,140,140,0.32)"></div>
<div class="a" style="left:1742px;top:535px;width:99px;height:1px;background:rgba(140,140,140,0.32)"></div>
<div class="a" style="left:1742px;top:567px;width:99px;height:1px;background:rgba(140,140,140,0.32)"></div>
<div class="a" style="left:1742px;top:599px;width:99px;height:1px;background:rgba(140,140,140,0.32)"></div>
<div class="a" style="left:1742px;top:631px;width:99px;height:1px;background:rgba(140,140,140,0.32)"></div>
<div class="a" style="left:1742px;top:663px;width:99px;height:1px;background:rgba(140,140,140,0.32)"></div>
</body></html>
